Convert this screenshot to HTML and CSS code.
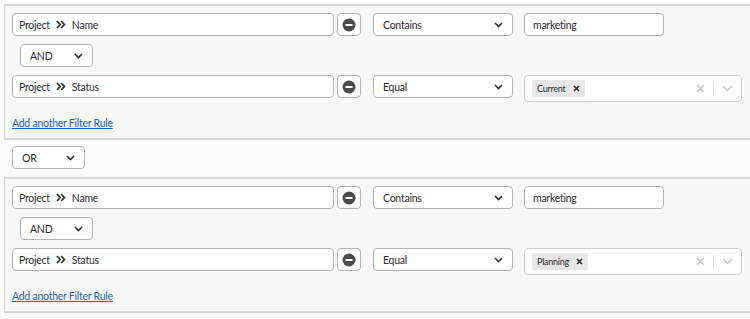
FILE: index.html
```html
<!DOCTYPE html>
<html lang="en">
<head>
    <meta charset="UTF-8">
    <title>Filter Rules</title>
    <link rel="stylesheet" href="styles.css">
</head>
<body>
    <div class="group">
        <div class="rule">
            <div class="field">Project <svg class="dbl" width="10" height="9" viewBox="0 0 10 9"><path d="M1 1l3.2 3.5L1 8M5.2 1l3.2 3.5L5.2 8" fill="none" stroke="#2c2c2c" stroke-width="1.7"/></svg> Name</div>
            <button class="remove"><svg width="14" height="14" viewBox="0 0 14 14"><circle cx="7" cy="7" r="6.5" fill="#4b4b4b"/><rect x="3.5" y="6" width="7" height="2" fill="#fff"/></svg></button>
            <div class="select op">Contains <svg class="chev" width="9" height="6" viewBox="0 0 9 6"><path d="M1 1l3.5 3.5L8 1" fill="none" stroke="#2c2c2c" stroke-width="1.6"/></svg></div>
            <div class="text-input">marketing</div>
        </div>
        <div class="select conj">AND <svg class="chev" width="9" height="6" viewBox="0 0 9 6"><path d="M1 1l3.5 3.5L8 1" fill="none" stroke="#2c2c2c" stroke-width="1.6"/></svg></div>
        <div class="rule">
            <div class="field">Project <svg class="dbl" width="10" height="9" viewBox="0 0 10 9"><path d="M1 1l3.2 3.5L1 8M5.2 1l3.2 3.5L5.2 8" fill="none" stroke="#2c2c2c" stroke-width="1.7"/></svg> Status</div>
            <button class="remove"><svg width="14" height="14" viewBox="0 0 14 14"><circle cx="7" cy="7" r="6.5" fill="#4b4b4b"/><rect x="3.5" y="6" width="7" height="2" fill="#fff"/></svg></button>
            <div class="select op">Equal <svg class="chev" width="9" height="6" viewBox="0 0 9 6"><path d="M1 1l3.5 3.5L8 1" fill="none" stroke="#2c2c2c" stroke-width="1.6"/></svg></div>
            <div class="multi">
                <span class="tag">Current <svg width="7" height="7" viewBox="0 0 7 7"><path d="M1 1l5 5M6 1l-5 5" stroke="#2c2c2c" stroke-width="1.5"/></svg></span>
                <span class="multi-tools">
                    <svg width="9" height="9" viewBox="0 0 9 9"><path d="M1 1l7 7M8 1l-7 7" stroke="#c4c4c4" stroke-width="1.5"/></svg>
                    <span class="sep"></span>
                    <svg width="11" height="7" viewBox="0 0 11 7"><path d="M1 1l4.5 4.5L10 1" fill="none" stroke="#c4c4c4" stroke-width="1.5"/></svg>
                </span>
            </div>
        </div>
        <a class="add-link" href="#">Add another Filter Rule</a>
    </div>

    <div class="select or">OR <svg class="chev" width="9" height="6" viewBox="0 0 9 6"><path d="M1 1l3.5 3.5L8 1" fill="none" stroke="#2c2c2c" stroke-width="1.6"/></svg></div>

    <div class="group">
        <div class="rule">
            <div class="field">Project <svg class="dbl" width="10" height="9" viewBox="0 0 10 9"><path d="M1 1l3.2 3.5L1 8M5.2 1l3.2 3.5L5.2 8" fill="none" stroke="#2c2c2c" stroke-width="1.7"/></svg> Name</div>
            <button class="remove"><svg width="14" height="14" viewBox="0 0 14 14"><circle cx="7" cy="7" r="6.5" fill="#4b4b4b"/><rect x="3.5" y="6" width="7" height="2" fill="#fff"/></svg></button>
            <div class="select op">Contains <svg class="chev" width="9" height="6" viewBox="0 0 9 6"><path d="M1 1l3.5 3.5L8 1" fill="none" stroke="#2c2c2c" stroke-width="1.6"/></svg></div>
            <div class="text-input">marketing</div>
        </div>
        <div class="select conj">AND <svg class="chev" width="9" height="6" viewBox="0 0 9 6"><path d="M1 1l3.5 3.5L8 1" fill="none" stroke="#2c2c2c" stroke-width="1.6"/></svg></div>
        <div class="rule">
            <div class="field">Project <svg class="dbl" width="10" height="9" viewBox="0 0 10 9"><path d="M1 1l3.2 3.5L1 8M5.2 1l3.2 3.5L5.2 8" fill="none" stroke="#2c2c2c" stroke-width="1.7"/></svg> Status</div>
            <button class="remove"><svg width="14" height="14" viewBox="0 0 14 14"><circle cx="7" cy="7" r="6.5" fill="#4b4b4b"/><rect x="3.5" y="6" width="7" height="2" fill="#fff"/></svg></button>
            <div class="select op">Equal <svg class="chev" width="9" height="6" viewBox="0 0 9 6"><path d="M1 1l3.5 3.5L8 1" fill="none" stroke="#2c2c2c" stroke-width="1.6"/></svg></div>
            <div class="multi">
                <span class="tag">Planning <svg width="7" height="7" viewBox="0 0 7 7"><path d="M1 1l5 5M6 1l-5 5" stroke="#2c2c2c" stroke-width="1.5"/></svg></span>
                <span class="multi-tools">
                    <svg width="9" height="9" viewBox="0 0 9 9"><path d="M1 1l7 7M8 1l-7 7" stroke="#c4c4c4" stroke-width="1.5"/></svg>
                    <span class="sep"></span>
                    <svg width="11" height="7" viewBox="0 0 11 7"><path d="M1 1l4.5 4.5L10 1" fill="none" stroke="#c4c4c4" stroke-width="1.5"/></svg>
                </span>
            </div>
        </div>
        <a class="add-link" href="#">Add another Filter Rule</a>
    </div>
</body>
</html>
```

FILE: styles.css
```css
* {
    box-sizing: border-box;
}
body {
    margin: 0;
    padding-top: 4px;
    background-color: #fafafa;
    font-family: Lato, "Open Sans", sans-serif;
    font-size: 10.5px;
    letter-spacing: -0.25px;
    color: #2c2c2c;
    overflow: hidden;
}
.group {
    width: 780px;
    margin-left: 4px;
    padding: 7px 0 8px 7px;
    background-color: #f7f7f7;
    border: 1px solid #d6d6d6;
    border-top-width: 2px;
    border-bottom-width: 2px;
}
.rule {
    display: flex;
    align-items: flex-start;
}
.field,
.select,
.text-input,
.remove,
.multi {
    height: 23px;
    background-color: #fff;
    border: 1px solid #b3b3b3;
    border-radius: 4px;
    display: flex;
    align-items: center;
}
.field {
    width: 322px;
    padding-left: 6px;
    gap: 6px;
}
.remove {
    width: 24px;
    margin-left: 3px;
    padding: 0;
    justify-content: center;
}
.select {
    justify-content: space-between;
    padding: 0 9px;
}
.op {
    width: 140px;
    margin-left: 12px;
}
.text-input {
    width: 140px;
    margin-left: 11px;
    padding-left: 8px;
}
.multi {
    width: 218px;
    height: 27px;
    margin-left: 11px;
    padding: 0 8px 0 7px;
    border-color: #d0d0d0;
    justify-content: space-between;
}
.tag {
    display: flex;
    align-items: center;
    gap: 7px;
    height: 17px;
    padding: 0 5px;
    background-color: #e6e6e6;
    border-radius: 2px;
    font-size: 9px;
}
.multi-tools {
    display: flex;
    align-items: center;
    gap: 8px;
}
.sep {
    width: 1px;
    height: 14px;
    background-color: #dadada;
}
.conj {
    width: 73px;
    margin: 8px 0 8px 8px;
}
.or {
    width: 73px;
    margin: 6px 0 8px 12px;
}
.add-link {
    display: block;
    width: max-content;
    margin-top: 14px;
    line-height: 14px;
    color: #1a63c7;
    text-decoration: underline;
}
```
